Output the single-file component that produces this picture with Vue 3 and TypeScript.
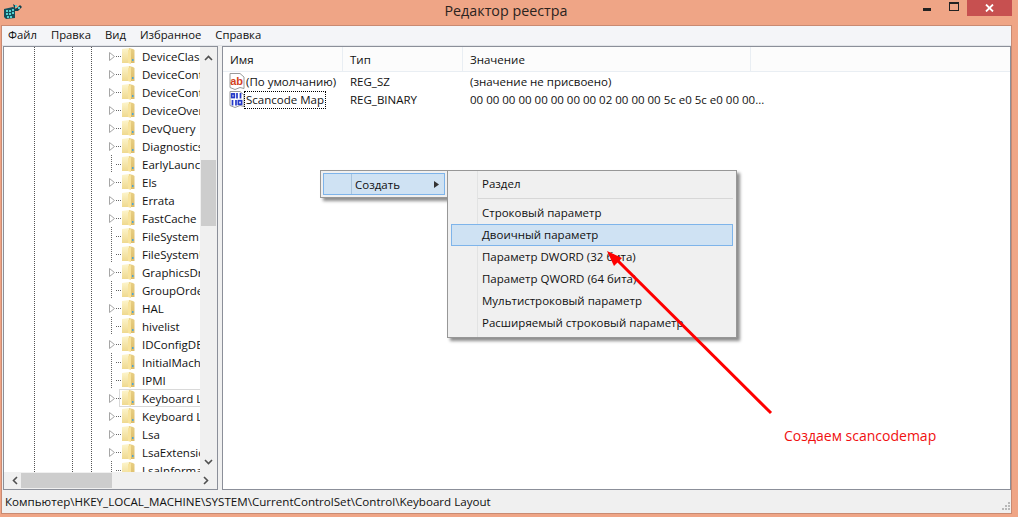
<script setup lang="ts">
interface TreeRow { name: string; arrow: boolean; current?: boolean }
const arrowed = new Set([0, 1, 2, 3, 4, 5, 7, 8, 9, 12, 14, 16, 19, 20, 21, 22])
const names: string[] = ['DeviceClass', 'DeviceContainers', 'DeviceContainerPropertyUpdateEvents', 'DeviceOverrides', 'DevQuery', 'Diagnostics', 'EarlyLaunch', 'Els', 'Errata', 'FastCache', 'FileSystem', 'FileSystemUtilities', 'GraphicsDrivers', 'GroupOrderList', 'HAL', 'hivelist', 'IDConfigDB', 'InitialMachineConfig', 'IPMI', 'Keyboard Layout', 'Keyboard Layouts', 'Lsa', 'LsaExtensionConfig', 'LsaInformation']
const rows: TreeRow[] = names.map((name, i) => ({ name, arrow: arrowed.has(i), current: i === 19 }))
const menus = ['Файл', 'Правка', 'Вид', 'Избранное', 'Справка']
const subItems = ['Строковый параметр', 'Двоичный параметр', 'Параметр DWORD (32 бита)', 'Параметр QWORD (64 бита)', 'Мультистроковый параметр', 'Расширяемый строковый параметр']
</script>

<template>
  <div class="page">
    <header class="titlebar">
      <svg class="appicon" width="20" height="18" viewBox="0 0 20 18">
        <path d="M1 7 L10 5 L12 6 L12 16 L3 17 L1 15Z" fill="#14505c" />
        <g fill="#52d0d0">
          <rect x="3" y="8" width="2" height="2" /><rect x="6" y="8" width="2" height="2" /><rect x="9" y="7" width="2" height="2" />
          <rect x="3" y="11" width="2" height="2" /><rect x="6" y="11" width="2" height="2" /><rect x="9" y="10" width="2" height="2" />
          <rect x="4" y="14" width="2" height="2" /><rect x="7" y="14" width="2" height="2" />
        </g>
        <path d="M10 2 L13 4 L11 7 L14 6 L17 3 L19 5 L15 9 L12 9Z" fill="#10404c" />
        <rect x="12" y="3" width="2" height="2" fill="#52d0d0" /><rect x="15" y="5" width="2" height="2" fill="#52d0d0" />
      </svg>
      <span class="title">Редактор реестра</span>
      <div class="controls">
        <span class="min"></span>
        <span class="max"></span>
        <span class="close">
          <svg width="9" height="8" viewBox="0 0 9 8"><path d="M1 0.5 L8 7.5 M8 0.5 L1 7.5" stroke="#fff" stroke-width="1.8" /></svg>
        </span>
      </div>
    </header>

    <div class="window">
      <nav class="menubar">
        <span v-for="m in menus" :key="m">{{ m }}</span>
      </nav>

      <div class="panes">
        <section class="tree">
          <div class="treebody">
            <div class="treerows">
              <div v-for="r in rows" :key="r.name + r.current" class="treerow" :class="{ current: r.current }">
                <span class="twist">
                  <svg v-if="r.arrow" width="6" height="9" viewBox="0 0 6 9"><path d="M0.5 0.5 L5.5 4.5 L0.5 8.5Z" fill="#fff" stroke="#a6a6a6" /></svg>
                  <i v-else class="branch"></i>
                </span>
                <i class="tick"></i>
                <svg class="folder" width="13" height="16" viewBox="0 0 13 16">
                  <defs>
                    <linearGradient id="fold" x1="0" y1="0" x2="0" y2="1">
                      <stop offset="0" stop-color="#fdf5cc" /><stop offset="1" stop-color="#efd98f" />
                    </linearGradient>
                    <linearGradient id="foldback" x1="0" y1="0" x2="0" y2="1">
                      <stop offset="0" stop-color="#e8cf85" /><stop offset="1" stop-color="#dcbc68" />
                    </linearGradient>
                  </defs>
                  <path d="M0 1 L7 0 L7 15 L0 15Z" fill="url(#fold)" />
                  <path d="M7 0 L11 1 L12.5 2 L12.5 15 L7 15Z" fill="url(#foldback)" />
                  <path d="M6 2 L9 1 L9 16 L6 15Z" fill="#f8e39c" />
                  <rect x="10" y="11" width="1.5" height="2" fill="#4aa3d8" />
                </svg>
                <span class="treelabel">{{ r.name }}</span>
              </div>
            </div>
            <div class="vscroll">
              <svg width="9" height="6" viewBox="0 0 9 6"><path d="M1 5 L4.5 1.5 L8 5" fill="none" stroke="#505050" stroke-width="1.6" /></svg>
              <i class="vthumb"></i>
              <svg class="down" width="9" height="6" viewBox="0 0 9 6"><path d="M1 1 L4.5 4.5 L8 1" fill="none" stroke="#505050" stroke-width="1.6" /></svg>
            </div>
          </div>
          <div class="hscroll">
            <svg width="6" height="9" viewBox="0 0 6 9"><path d="M5 1 L1.5 4.5 L5 8" fill="none" stroke="#505050" stroke-width="1.6" /></svg>
            <i class="hthumb"></i>
            <svg class="right" width="6" height="9" viewBox="0 0 6 9"><path d="M1 1 L4.5 4.5 L1 8" fill="none" stroke="#505050" stroke-width="1.6" /></svg>
          </div>
        </section>

        <section class="list">
          <div class="listhead">
            <span class="c1">Имя</span><span class="c2">Тип</span><span class="c3">Значение</span><span class="c4"></span>
          </div>
          <div class="listrow">
            <span class="c1 namecell">
              <svg class="valicon" width="16" height="18" viewBox="0 0 16 18">
                <path d="M1 0.5 H11 L15 4 V15.5 L11 14.5 L6 16.5 L1 14.5Z" fill="#fff" stroke="#9a9a9a" />
                <text x="1.2" y="11.5" class="abtext">ab</text>
              </svg>
              <span class="nm">(По умолчанию)</span>
            </span>
            <span class="c2">REG_SZ</span><span class="c3">(значение не присвоено)</span>
          </div>
          <div class="listrow">
            <span class="c1 namecell">
              <svg class="valicon" width="16" height="18" viewBox="0 0 16 18">
                <path d="M1 0.5 H11 L15 4 V15.5 L11 14.5 L6 16.5 L1 14.5Z" fill="#fff" stroke="#9a9a9a" />
                <g fill="none" stroke="#2438c8" stroke-width="1.7">
                  <rect x="2.7" y="2.9" width="2.6" height="3.6" /><path d="M8 2 V7.5 M11.5 2 V7.5" />
                  <path d="M3.5 9 V14.5 M7 9 V14.5" /><rect x="9.4" y="9.7" width="3.2" height="3.6" />
                </g>
              </svg>
              <span class="nm focused">Scancode Map</span>
            </span>
            <span class="c2">REG_BINARY</span><span class="c3">00 00 00 00 00 00 00 00 02 00 00 00 5c e0 5c e0 00 00...</span>
          </div>
        </section>
      </div>

      <footer class="status">
        <span>Компьютер\HKEY_LOCAL_MACHINE\SYSTEM\CurrentControlSet\Control\Keyboard Layout</span>
        <svg class="grip" width="9" height="9" viewBox="0 0 9 9" fill="#b8b8b8">
          <rect x="6" y="0" width="2" height="2" /><rect x="3" y="3" width="2" height="2" /><rect x="6" y="3" width="2" height="2" />
          <rect x="0" y="6" width="2" height="2" /><rect x="3" y="6" width="2" height="2" /><rect x="6" y="6" width="2" height="2" />
        </svg>
      </footer>
    </div>

    <div class="ctx first">
      <div class="ctxitem hot">
        <span>Создать</span>
        <svg width="5" height="7" viewBox="0 0 5 7"><path d="M0 0 L5 3.5 L0 7Z" fill="#333" /></svg>
      </div>
    </div>

    <div class="ctx second">
      <div class="subitem">Раздел</div>
      <div class="sep"></div>
      <div v-for="(s, i) in subItems" :key="s" class="subitem" :class="{ hot: i === 1 }">{{ s }}</div>
    </div>

    <svg class="arrow" width="1018" height="517" viewBox="0 0 1018 517">
      <path d="M771 413 L612 255" stroke="#fe0000" stroke-width="3" fill="none" />
      <path d="M607 251 L622 258 L614 266Z" fill="#fe0000" />
    </svg>
    <span class="note">Создаем scancodemap</span>
  </div>
</template>

<style>
html, body { margin: 0; padding: 0; }
</style>

<style scoped>
.page {
  position: relative;
  width: 1018px;
  height: 517px;
  overflow: hidden;
  background: #efa586;
  font-family: "Open Sans", "Noto Sans", sans-serif;
  font-size: 11.5px;
  color: #111;
  display: flex;
  flex-direction: column;
}
.titlebar {
  height: 25px;
  flex: none;
  display: flex;
  position: relative;
}
.appicon { position: absolute; left: 3px; top: 2px; }
.title {
  width: 100%;
  margin-left: -3px;
  text-align: center;
  font-size: 14.3px;
  line-height: 22px;
  color: #2a2320;
}
.controls {
  position: absolute;
  right: 6px;
  top: 0;
  display: flex;
}
.min { width: 8px; height: 3px; background: #222; margin: 8px 18px 0 0; }
.max { width: 8px; height: 6px; border: 1px solid #222; border-top-width: 2px; margin: 2px 8px 0 0; }
.close {
  width: 45px;
  height: 16px;
  background: #c75050;
  display: flex;
  align-items: center;
  justify-content: center;
}
.window {
  flex: none;
  width: 1011px;
  height: 489px;
  margin-left: 1px;
  box-sizing: border-box;
  border: 1px solid #c98a72;
  background: #f0f0f0;
  display: flex;
  flex-direction: column;
}
.menubar {
  height: 19px;
  flex: none;
  background: #f4f5f8;
  border-bottom: 1px solid #e2e4e8;
  display: flex;
  padding-left: 6px;
  line-height: 18px;
  gap: 14px;
  font-size: 11.3px;
}
.panes {
  flex: 1;
  min-height: 0;
  display: flex;
  gap: 4px;
  padding-left: 1px;
}
.tree {
  width: 215px;
  box-sizing: border-box;
  border: 1px solid #8b8f99;
  background: #f0f0f0;
  display: flex;
  flex-direction: column;
}
.treebody {
  flex: 1;
  min-height: 0;
  display: flex;
}
.treerows {
  width: 196px;
  flex: none;
  overflow: hidden;
  background-color: #fff;
  background-image:
    repeating-linear-gradient(to bottom, #555 0 1px, transparent 1px 2px),
    repeating-linear-gradient(to bottom, #555 0 1px, transparent 1px 2px),
    repeating-linear-gradient(to bottom, #555 0 1px, transparent 1px 2px);
  background-size: 1px 100%;
  background-repeat: no-repeat;
  background-position: 30px 0, 68px 0, 87px 0;
}
.treerow {
  height: 18px;
  display: flex;
  align-items: center;
  padding-left: 105px;
  box-sizing: border-box;
  white-space: nowrap;
  position: relative;
}
.treerow.current::after {
  content: "";
  position: absolute;
  left: 115px;
  right: 0;
  top: 0;
  bottom: 0;
  box-sizing: border-box;
  border: 1px solid #d9d9d9;
  border-right: none;
}
.twist { width: 7px; height: 18px; flex: none; display: flex; align-items: center; position: relative; }
.branch {
  position: absolute;
  left: 2px;
  top: 0;
  height: 18px;
  width: 1px;
  background: repeating-linear-gradient(to bottom, #666 0 1px, transparent 1px 2px);
}
.tick {
  width: 6px;
  height: 1px;
  flex: none;
  background: repeating-linear-gradient(to right, #666 0 1px, transparent 1px 2px);
}
.folder { flex: none; }
.treelabel { margin-left: 7px; }
.vscroll {
  width: 16px;
  flex: none;
  background: #f0f0f0;
  display: flex;
  flex-direction: column;
  align-items: center;
  padding-top: 8px;
  box-sizing: border-box;
}
.vthumb { width: 15px; height: 66px; background: #cdcdcd; margin-top: 99px; }
.down { margin-top: auto; margin-bottom: 7px; }
.hscroll {
  height: 17px;
  flex: none;
  display: flex;
  align-items: center;
  padding: 0 8px;
  background: #f0f0f0;
}
.hthumb { width: 91px; height: 15px; background: #cdcdcd; margin-left: 3px; }
.right { margin-left: auto; }
.list {
  flex: 1;
  min-width: 0;
  box-sizing: border-box;
  border: 1px solid #8b8f99;
  background: #fff;
}
.listhead {
  height: 25px;
  box-sizing: border-box;
  background: #fcfcfc;
  border-bottom: 1px solid #e9eef3;
  display: flex;
  line-height: 26px;
  margin-bottom: 1px;
}
.listhead span { border-right: 1px solid #e9eef3; box-sizing: border-box; }
.listrow { height: 18px; display: flex; line-height: 18px; white-space: nowrap; }
.c1 { width: 120px; padding-left: 7px; flex: none; box-sizing: border-box; }
.c2 { width: 120px; padding-left: 7px; flex: none; box-sizing: border-box; }
.c3 { width: 288px; padding-left: 7px; flex: none; box-sizing: border-box; }
.c4 { flex: 1; border-right: none !important; }
.namecell { display: flex; align-items: center; padding-left: 6px; }
.valicon { flex: none; }
.abtext { font: bold 11px "Liberation Sans", sans-serif; fill: #d4421e; }
.nm { padding: 0 1px; line-height: 16px; }
.focused { outline: 1px dotted #000; outline-offset: 0; }
.status {
  height: 23px;
  flex: none;
  padding-left: 3px;
  line-height: 23px;
  position: relative;
  background: #f0f0f0;
  font-size: 11.6px;
}
.grip { position: absolute; right: 0; bottom: 2px; }
.ctx {
  position: absolute;
  box-sizing: border-box;
  background: #f0f0f0;
  border: 1px solid #979797;
  box-shadow: 3px 3px 3px rgba(0, 0, 0, 0.45);
  padding: 2px;
}
.first { left: 320px; top: 170px; width: 128px; height: 28px; }
.ctxitem {
  height: 22px;
  box-sizing: border-box;
  border: 1px solid #7eb4ea;
  background: #cfe2f3;
  display: flex;
  align-items: center;
  padding-left: 31px;
  background-image: linear-gradient(#a9c4dd, #a9c4dd);
  background-size: 1px 100%;
  background-position: 27px 0;
  background-repeat: no-repeat;
}
.ctxitem svg { margin-left: auto; margin-right: 5px; }
.second {
  left: 447px;
  top: 170px;
  width: 290px;
  height: 168px;
  padding: 2px 3px;
  background-image: linear-gradient(#e2e3e3, #e2e3e3);
  background-size: 1px 100%;
  background-position: 29px 0;
  background-repeat: no-repeat;
}
.subitem {
  height: 22px;
  box-sizing: border-box;
  line-height: 22px;
  padding-left: 31px;
  white-space: nowrap;
}
.subitem.hot {
  border: 1px solid #7eb4ea;
  background: #cfe2f3;
  line-height: 20px;
  padding-left: 30px;
}
.sep { height: 1px; margin: 3px 0 3px 27px; background: #d7d7d7; }
.arrow { position: absolute; left: 0; top: 0; pointer-events: none; }
.note {
  position: absolute;
  left: 784px;
  top: 427px;
  color: #f01010;
  font-size: 14px;
  line-height: 18px;
}
</style>
